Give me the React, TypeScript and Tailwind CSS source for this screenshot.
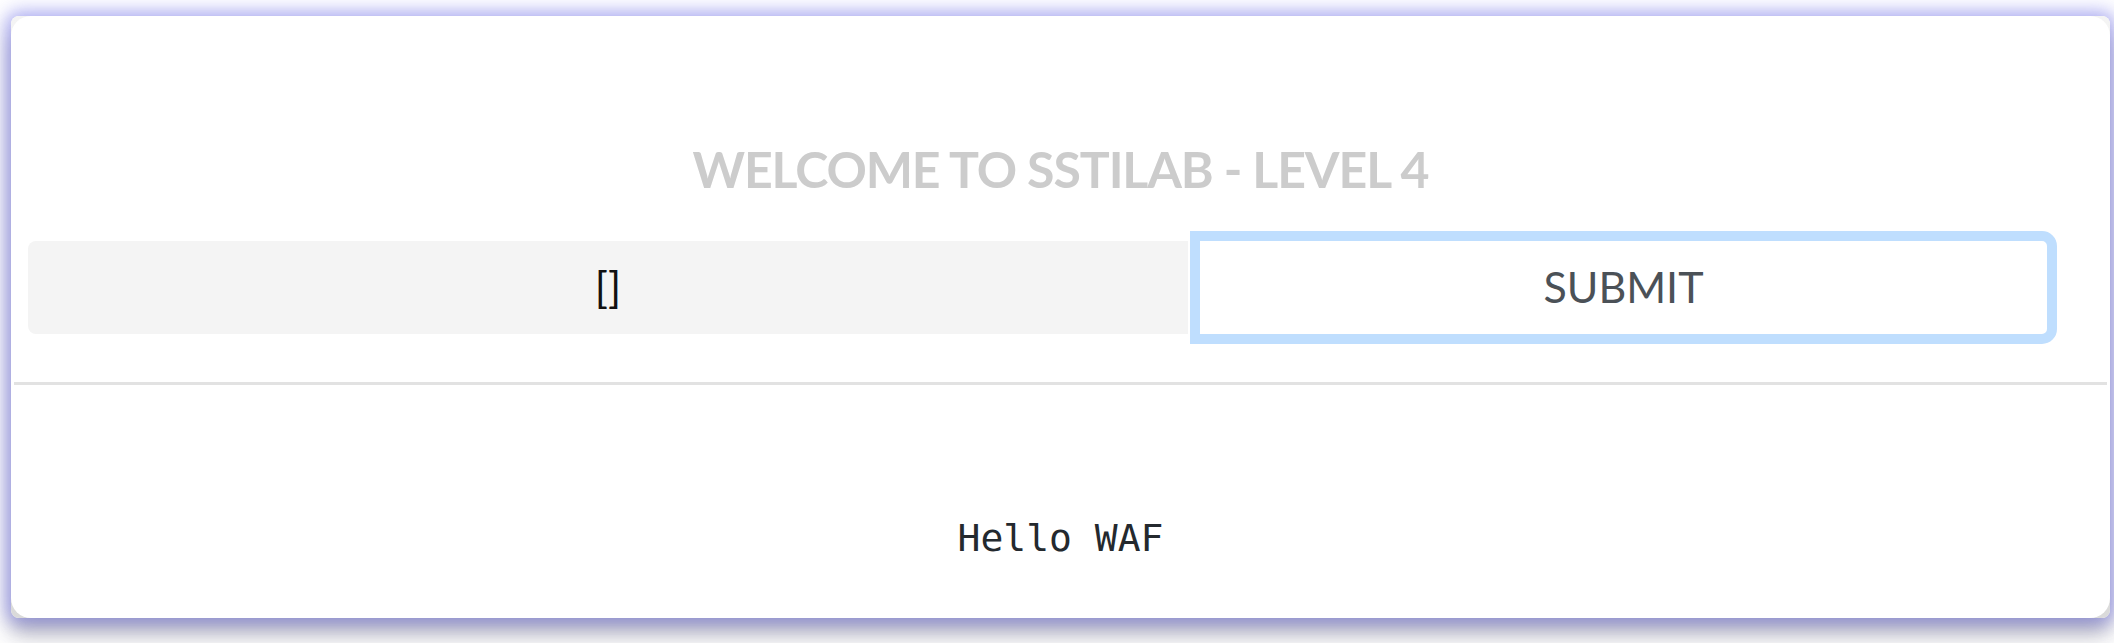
import React from "react";

function App() {
  return (
    <div className="w-[2114px] h-[643px] bg-white overflow-hidden pt-[16px] pl-[11px]">
      <div className="w-[2099px] h-[602px] rounded-[8px] bg-gradient-to-b from-[#f4f4f4] to-[#dadada] shadow-[0_0_18px_5px_rgba(110,110,235,0.55),0_16px_22px_rgba(40,40,60,0.35)]">
        <div className="h-full rounded-[20px] bg-white flex flex-col pt-[123px]">
          <h1 className="text-center font-['Lato',sans-serif] font-bold text-[50px] leading-[60px] tracking-[-1.1px] text-[#cccccc]">
            WELCOME TO SSTILAB - LEVEL 4
          </h1>

          <form
            className="flex flex-row gap-[12px] ml-[17px] mt-[42px]"
            onSubmit={(e) => e.preventDefault()}
          >
            <div className="w-[1160px] h-[93px] rounded-l-[8px] bg-[#f4f4f4] flex items-center justify-center font-['Lato',sans-serif] text-[43px] text-[#111111]">
              []
            </div>
            <button
              type="submit"
              className="w-[847px] h-[93px] rounded-r-[5px] bg-white outline-[10px] outline-solid outline-[#bfdefe] flex items-center justify-center font-['Lato',sans-serif] text-[43px] text-[#4b5157]"
            >
              SUBMIT
            </button>
          </form>

          <div className="mt-[48px] mx-[3px] h-[3px] bg-[#e2e2e2]" />

          <div className="mt-[125px] text-center font-['DejaVu_Sans_Mono',monospace] text-[38px] text-[#24292e]">
            Hello WAF
          </div>
        </div>
      </div>
    </div>
  );
}

export default App;
